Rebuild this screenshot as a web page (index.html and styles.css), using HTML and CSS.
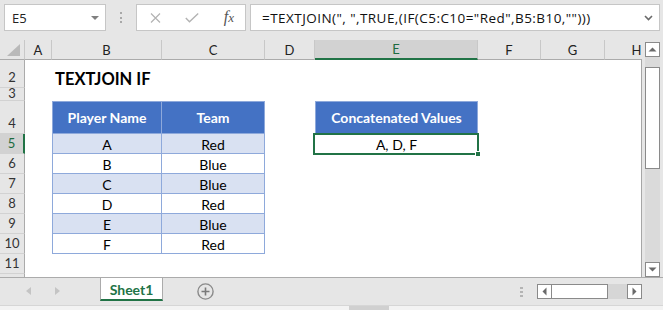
FILE: index.html
```html
<!DOCTYPE html>
<html lang="en">
<head>
  <meta charset="utf-8">
  <title>TEXTJOIN IF</title>
  <link rel="stylesheet" href="styles.css">
</head>
<body>
<div class="xl">

  <!-- ───── formula bar ───── -->
  <div class="fbar">
    <div class="box namebox"><span>E5</span><i class="dd"></i></div>
    <div class="grip"><i></i><i></i><i></i></div>
    <div class="box fnbox">
      <svg width="11" height="10" viewBox="0 0 11 10"><path d="M1 0.5L10 9.5M10 0.5L1 9.5" stroke="#b3b3b3" stroke-width="1.2" fill="none"/></svg>
      <svg width="14" height="10" viewBox="0 0 14 10"><path d="M0.8 5L4.5 8.8L13.2 0.6" stroke="#b3b3b3" stroke-width="1.4" fill="none"/></svg>
      <span class="fx">f<small>x</small></span>
    </div>
    <div class="box formula">
      <span class="ftext">=TEXTJOIN(", ",TRUE,(IF(C5:C10="Red",B5:B10,"")))</span>
      <svg width="9" height="6" viewBox="0 0 9 6"><path d="M1 1L4.5 4.5L8 1" stroke="#6a6a6a" stroke-width="1.6" fill="none"/></svg>
    </div>
  </div>

  <!-- ───── sheet ───── -->
  <div class="main">
    <div class="grid">
      <div class="row hdr">
        <div class="corner"><svg width="13" height="12" viewBox="0 0 13 12"><path d="M13 0V12H0Z" fill="#b9b9b9"/></svg></div>
        <div class="ch ca">A</div>
        <div class="ch cb">B</div>
        <div class="ch cc">C</div>
        <div class="ch cd">D</div>
        <div class="ch ce on">E</div>
        <div class="ch cf">F</div>
        <div class="ch cg">G</div>
        <div class="ch cx">H</div>
      </div>

      <div class="rows">
        <div class="row r2">
          <div class="rh">2</div>
          <div class="ca"></div>
          <div class="cb title">TEXTJOIN IF</div>
        </div>
        <div class="row r3"><div class="rh">3</div></div>
        <div class="row r4">
          <div class="rh">4</div>
          <div class="ca"></div>
          <div class="cb th first">Player Name</div>
          <div class="cc th">Team</div>
          <div class="cd"></div>
          <div class="ce th solo">Concatenated Values</div>
        </div>
        <div class="row rd">
          <div class="rh on">5</div>
          <div class="ca"></div>
          <div class="cb td band first">A</div>
          <div class="cc td band">Red</div>
          <div class="cd"></div>
          <div class="ce td active">A, D, F<span class="selbox"><i></i></span></div>
        </div>
        <div class="row rd">
          <div class="rh">6</div>
          <div class="ca"></div>
          <div class="cb td first">B</div>
          <div class="cc td">Blue</div>
        </div>
        <div class="row rd">
          <div class="rh">7</div>
          <div class="ca"></div>
          <div class="cb td band first">C</div>
          <div class="cc td band">Blue</div>
        </div>
        <div class="row rd">
          <div class="rh">8</div>
          <div class="ca"></div>
          <div class="cb td first">D</div>
          <div class="cc td">Red</div>
        </div>
        <div class="row rd">
          <div class="rh">9</div>
          <div class="ca"></div>
          <div class="cb td band first">E</div>
          <div class="cc td band">Blue</div>
        </div>
        <div class="row rd">
          <div class="rh">10</div>
          <div class="ca"></div>
          <div class="cb td first">F</div>
          <div class="cc td">Red</div>
        </div>
        <div class="row rd"><div class="rh">11</div></div>
        <div class="row rd"><div class="rh"></div></div>
      </div>
    </div>

    <div class="vscroll">
      <div class="sbtn"><svg width="9" height="5" viewBox="0 0 9 5"><path d="M0.5 4.5H8.5L4.5 0.5Z" fill="#6a6a6a"/></svg></div>
      <div class="vtrack"><div class="vthumb"></div></div>
      <div class="sbtn"><svg width="9" height="5" viewBox="0 0 9 5"><path d="M0.5 0.5H8.5L4.5 4.5Z" fill="#6a6a6a"/></svg></div>
    </div>
  </div>

  <!-- ───── sheet tabs ───── -->
  <div class="tabbar">
    <div class="tnav">
      <svg width="5" height="8" viewBox="0 0 5 8"><path d="M5 0V8L0 4Z" fill="#c4c4c4"/></svg>
      <svg width="5" height="8" viewBox="0 0 5 8"><path d="M0 0V8L5 4Z" fill="#c4c4c4"/></svg>
    </div>
    <div class="tab">Sheet1</div>
    <div class="addsheet">
      <svg width="17" height="17" viewBox="0 0 17 17"><circle cx="8.5" cy="8.5" r="7.6" stroke="#8a8a8a" stroke-width="1.4" fill="none"/><path d="M8.5 4.5V12.5M4.5 8.5H12.5" stroke="#7a7a7a" stroke-width="1.6"/></svg>
    </div>
    <div class="spacer"></div>
    <div class="hgrip"><i></i><i></i><i></i></div>
    <div class="hscroll">
      <div class="sbtn"><svg width="5" height="9" viewBox="0 0 5 9"><path d="M4.5 0.5V8.5L0.5 4.5Z" fill="#6a6a6a"/></svg></div>
      <div class="hthumb"></div>
      <div class="htrack"></div>
      <div class="sbtn"><svg width="5" height="9" viewBox="0 0 5 9"><path d="M0.5 0.5V8.5L4.5 4.5Z" fill="#6a6a6a"/></svg></div>
    </div>
  </div>

  <div class="status">
    <div class="views"><i></i><i></i><i></i></div>
  </div>
</div>
</body>
</html>
```

FILE: styles.css
```css
*      {box-sizing:border-box}
body   {margin:0;background:#fff;font-family:Lato, "Liberation Sans", sans-serif}
.xl    {width:663px;height:310px;background:#e6e6e6;overflow:hidden}

/* formula bar */
.fbar    {display:flex;height:40px;padding:4px 3px 0 4px}
.box     {height:27px;background:#fff;border:1px solid #c6c6c6;display:flex;align-items:center}
.namebox {width:102px;padding:0 6px 0 7px;justify-content:space-between;font:13px "Open Sans", sans-serif;color:#222}
.dd      {width:0;height:0;border-left:4px solid transparent;border-right:4px solid transparent;border-top:4px solid #808080}
.grip    {width:30px;display:flex;flex-direction:column;align-items:center;padding-top:8px;gap:2.5px}
.grip i  {width:2px;height:2px;background:#a8a8a8}
.fnbox   {width:110px;padding:0 11px 0 13px;justify-content:space-between}
.fx      {font:italic 16px "Liberation Serif", serif;color:#555;margin-bottom:2px}
.fx small{font-size:13px}
.formula {flex:1;margin-left:4px;padding:0 6px 0 11px;justify-content:space-between}
.ftext   {font:13.5px "Open Sans", sans-serif;letter-spacing:.45px;color:#111;white-space:nowrap}

/* grid */
.main    {display:flex;height:237px}
.grid    {width:642px;overflow:hidden;flex-shrink:0}
.row     {display:flex;height:20px}
.row > div {flex-shrink:0;height:100%}
.rows    {background:#fff;border-right:1px solid #a6a6a6;height:217px;overflow:hidden}
.r2 {height:28px} .r3 {height:13px} .r4 {height:33px}

.ca {width:27px} .cb {width:110px} .cc {width:103px} .cd {width:50px}
.ce {width:163px} .cf {width:63px} .cg {width:64px} .cx {width:64px}

.corner  {width:25px;background:#e6e6e6;border-right:1px solid #c8c8c8;border-bottom:1px solid #ababab;
          display:flex;align-items:flex-end;justify-content:flex-end;padding:0 4px 3px 0}
.ch      {background:#e6e6e6;border-right:1px solid #c8c8c8;border-bottom:1px solid #ababab;
          display:flex;align-items:center;justify-content:center;font-size:13px;color:#222}
.ch.on   {background:#d2d2d2;border-bottom:2px solid #217346;color:#1d6b40}

.rh      {width:25px;background:#e6e6e6;border-right:1px solid #ababab;border-bottom:1px solid #d2d2d2;
          display:flex;align-items:flex-end;justify-content:center;font-size:13px;line-height:13px;
          color:#333;padding-bottom:3px;overflow:hidden}
.r3 .rh  {padding-bottom:4px;line-height:9px;align-items:flex-start;padding-top:1px}
.rh.on   {background:#d2d2d2;border-right:2px solid #217346;color:#1d6b40}

.title   {font-weight:bold;font-size:16.5px;padding:9px 0 0 3px;white-space:nowrap;color:#000}

.th, .td {display:flex;align-items:center;justify-content:center;font-size:14px;
          border-right:1px solid #8ea9db;border-bottom:1px solid #8ea9db;white-space:nowrap}
.th      {background:#4472c4;color:#fff;font-weight:bold;border-top:1px solid #8ea9db}
.td      {color:#000;padding-top:1px}
.first   {border-left:1px solid #8ea9db}
.solo    {border-left:1px solid #8ea9db}
.band    {background:#d9e1f2}

.active  {position:relative;border:none}
.selbox  {position:absolute;left:-2px;top:-1px;right:-1px;bottom:-1px;border:2px solid #217346}
.selbox i{position:absolute;right:-4px;bottom:-4px;width:6px;height:6px;background:#217346;border:1px solid #fff}

/* vertical scrollbar */
.vscroll {width:21px;padding:2px 3px 0;display:flex;flex-direction:column}
.sbtn    {width:15px;height:15px;background:#fff;border:1px solid #8a8a8a;display:flex;
          align-items:center;justify-content:center;flex-shrink:0}
.vtrack  {flex:1;background:#dadada;padding-top:10px}
.vthumb  {height:102px;background:#fff;border:1px solid #8a8a8a}

/* sheet tabs */
.tabbar  {display:flex;height:28px;border-top:1px solid #ababab;align-items:flex-start}
.tnav    {width:100px;display:flex;gap:24px;padding:9px 0 0 26px}
.tab     {width:63px;height:23px;background:#fff;border-left:1px solid #ababab;border-right:1px solid #ababab;
          border-bottom:2px solid #217346;display:flex;align-items:center;justify-content:center;
          font-weight:bold;font-size:14px;color:#217346;padding-top:1px}
.addsheet{margin:5px 0 0 34px;height:17px}
.spacer  {flex:1}
.hgrip   {display:flex;flex-direction:column;gap:2px;margin:9px 14px 0 0}
.hgrip i {width:3px;height:2px;background:#b4b4b4}
.hscroll {display:flex;margin:6px 21px 0 0;height:15px}
.hthumb  {width:56px;background:#fff;border:1px solid #8a8a8a;border-left:none}
.htrack  {width:19px;background:#d6d6d6}

/* status bar */
.status  {height:5px;background:#f3f3f3;border-top:1px solid #d6d6d6;padding-left:349px}
.views   {width:40px;height:4px;background:#d0d0d0;display:flex;gap:27px;padding-left:13px}
.views i {width:13px;height:3px;margin-top:1px;background:#444}
```
